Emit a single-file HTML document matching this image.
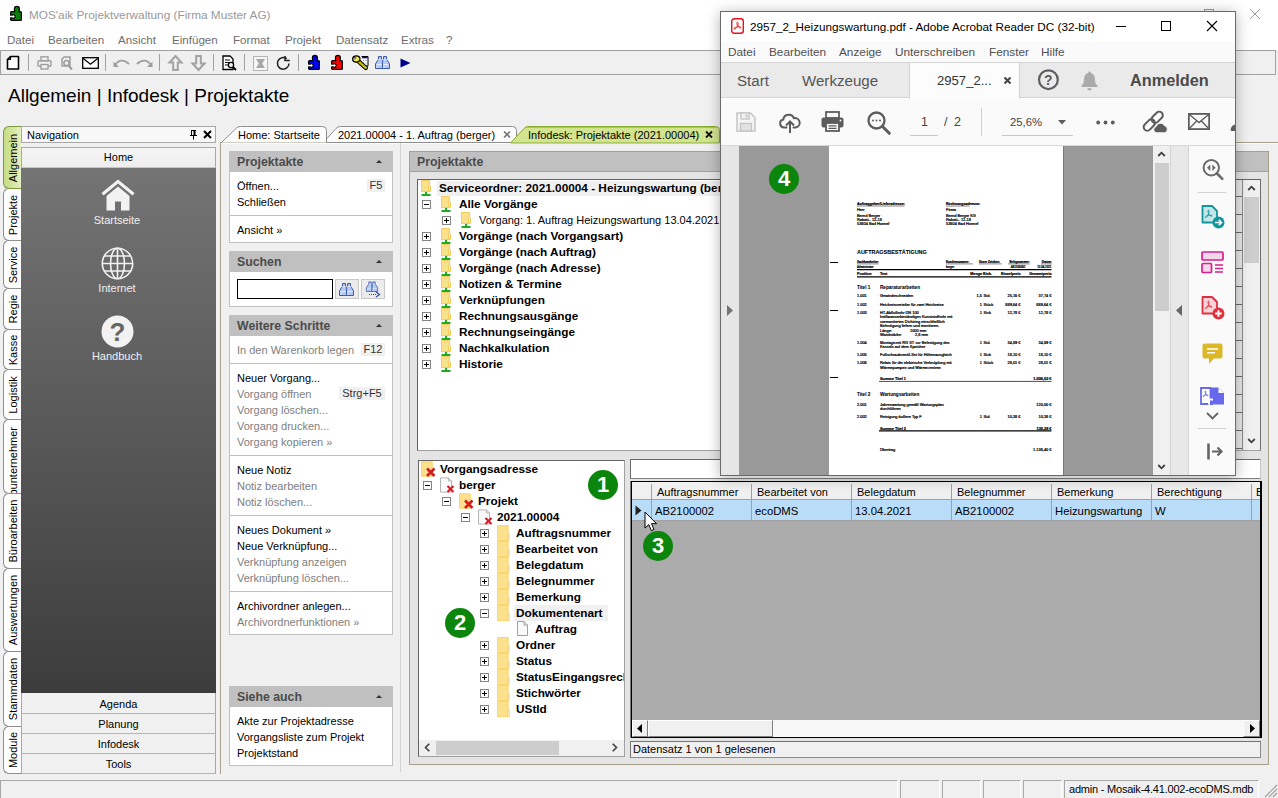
<!DOCTYPE html>
<html>
<head>
<meta charset="utf-8">
<title>MOS'aik Projektverwaltung</title>
<style>
*{box-sizing:border-box;margin:0;padding:0}
html,body{width:1278px;height:798px;overflow:hidden;background:#f0f0f0}
body{font-family:"Liberation Sans",sans-serif;font-size:11px;color:#000;position:relative}
.a{position:absolute}
.t{position:absolute;white-space:pre;line-height:14px;height:14px}
.b{font-weight:bold;font-size:11.8px}
.g{color:#6d6d6d}
.g2{color:#7e7e7e}
svg{position:absolute;overflow:visible}
/* main window chrome */
#titlebar{left:0;top:0;width:1278px;height:50px;background:#fff}
#toolbar{left:0;top:50px;width:1276px;height:25px;border:1px solid #a0a0a0;background:#f0f0f0}
.tsep{position:absolute;top:54px;width:1px;height:17px;background:#a0a0a0}
/* side tabs */
.vt{position:absolute;left:3px;width:18px;border:1px solid #8e8e8e;border-right:none;border-radius:6px 0 0 6px;background:#fdfdfd}
.vt span{position:absolute;left:50%;top:50%;white-space:pre;transform:translate(-50%,-50%) rotate(-90deg);font-size:11px;line-height:14px}
/* nav */
.navbtn{position:absolute;left:21px;width:195px;height:20px;border:1px solid #a8a8a8;border-bottom-color:#c4c4c4;background:linear-gradient(#f4f4f4,#eeeeee);text-align:center;line-height:18px;font-size:11px}
.nb{border-top:none;border-bottom-color:#b4b4b4;background:#f0f0f0;line-height:21px}
/* task panels */
.ph{position:absolute;left:229px;width:164px;height:21px;background:#c0c0c0}
.ph b{position:absolute;left:8px;top:4px;font-size:12.3px;color:#4b4b4b;line-height:14px}
.ph i{position:absolute;right:11px;top:9px;width:0;height:0;border-left:3px solid transparent;border-right:3px solid transparent;border-bottom:3px solid #333}
.pb{position:absolute;left:229px;width:164px;background:#fff;border:1px solid #c0c0c0;border-top:none}
.pl{position:absolute;left:229px;width:164px;height:1px;background:#c0c0c0}
.kb{position:absolute;background:#f0f0f0;height:13px;line-height:13px;text-align:center;color:#333;font-size:11px}
/* trees */
.ex{position:absolute;width:9px;height:9px;border:1px solid #848484;background:#fff}
.ex:before{content:"";position:absolute;left:1px;top:3px;width:5px;height:1px;background:#000}
.ex.p:after{content:"";position:absolute;left:3px;top:1px;width:1px;height:5px;background:#000}
.badge{position:absolute;width:30px;height:30px;border-radius:50%;background:#0c850c;color:#fff;font-weight:bold;font-size:22px;line-height:30px;text-align:center}
</style>
</head>
<body>
<!-- ===== MAIN WINDOW CHROME ===== -->
<div class="a" id="titlebar"></div>
<div class="t" style="left:29px;top:8px;font-size:11.8px;color:#999">MOS'aik Projektverwaltung (Firma Muster AG)</div>
<div class="a" id="toolbar"></div>
<!-- title icon -->
<svg style="left:10px;top:6px" width="12" height="15" viewBox="0 0 12 15"><path d="M0 9.500h4v2.200h-4z" fill="#fff"/><circle cx="3.600" cy="10.500" r="1.600" fill="#fff"/><path d="M0.600 6.600Q0.600 5.600 1.600 5.600H4.900Q4.400 4.600 4.400 2.900A2.500 2.500 0 0 1 9.400 2.900Q9.400 4.600 8.900 5.600H10.400Q11.400 5.600 11.400 6.600V13.400Q11.400 14.400 10.400 14.400H1.600Q0.600 14.400 0.600 13.400V11.900H2.400A1.770 1.770 0 1 0 2.400 9.100H0.600Z" fill="#088008" stroke="#000" stroke-width="1.200" stroke-linejoin="round"/></svg>
<!-- main window caption buttons -->
<svg style="left:1250px;top:9px" width="10" height="10" viewBox="0 0 10 10"><path d="M0 0L10 10M10 0L0 10" stroke="#999" stroke-width="1"/></svg>
<div class="a" style="left:1204px;top:9px;width:10px;height:10px;border:1px solid #999"></div>
<!-- menu -->
<div class="t g" style="left:7px;top:33px;font-size:11.600px">Datei</div>
<div class="t g" style="left:48px;top:33px;font-size:11.600px">Bearbeiten</div>
<div class="t g" style="left:118px;top:33px;font-size:11.600px">Ansicht</div>
<div class="t g" style="left:172px;top:33px;font-size:11.600px">Einfügen</div>
<div class="t g" style="left:233px;top:33px;font-size:11.600px">Format</div>
<div class="t g" style="left:285px;top:33px;font-size:11.600px">Projekt</div>
<div class="t g" style="left:336px;top:33px;font-size:11.600px">Datensatz</div>
<div class="t g" style="left:401px;top:33px;font-size:11.600px">Extras</div>
<div class="t g" style="left:446px;top:33px;font-size:11.600px">?</div>
<!-- toolbar separators -->
<div class="tsep" style="left:28px"></div><div class="tsep" style="left:105px"></div><div class="tsep" style="left:159px"></div><div class="tsep" style="left:213px"></div><div class="tsep" style="left:244px"></div><div class="tsep" style="left:298px"></div>
<!-- toolbar icons -->
<svg style="left:6px;top:55px" width="14" height="16" viewBox="0 0 14 16"><path d="M4.5 1.5h8v12.5h-11v-9.5z" fill="#fff" stroke="#000" stroke-width="1.6" stroke-linejoin="round"/><path d="M1.5 4.5h3v-3" fill="none" stroke="#000" stroke-width="1.2"/></svg>
<svg style="left:37px;top:56px" width="15" height="14" viewBox="0 0 15 14"><g fill="none" stroke="#9e9e9e" stroke-width="1.4"><rect x="4" y="0.8" width="7" height="4"/><rect x="1" y="4.8" width="13" height="5.5" rx="1"/><rect x="4" y="8.5" width="7" height="4.5" fill="#f0f0f0"/></g></svg>
<svg style="left:60px;top:56px" width="14" height="15" viewBox="0 0 14 15"><g fill="none" stroke="#9e9e9e" stroke-width="1.5"><path d="M4 1h6v9h-8v-7z"/><circle cx="6.5" cy="7" r="2.6" fill="#f0f0f0"/><path d="M8.5 9.5l3.5 4" stroke-width="2"/></g></svg>
<svg style="left:82px;top:57px" width="17" height="12" viewBox="0 0 17 12"><rect x="0.700" y="0.700" width="15.600" height="10.600" fill="#fff" stroke="#000" stroke-width="1.300"/><path d="M1 1.200l7.500 6 7.500-6" fill="none" stroke="#000" stroke-width="1.300"/></svg>
<svg style="left:113px;top:58px" width="17" height="10" viewBox="0 0 17 10"><path d="M2 7.5c3-6 9-6.5 14-1.5" fill="none" stroke="#9e9e9e" stroke-width="1.8"/><path d="M0.5 3.5v5.5h5.5z" fill="#9e9e9e"/></svg>
<svg style="left:136px;top:58px" width="17" height="10" viewBox="0 0 17 10"><path d="M15 7.5c-3-6-9-6.5-14-1.5" fill="none" stroke="#9e9e9e" stroke-width="1.8"/><path d="M16.5 3.5v5.5h-5.5z" fill="#9e9e9e"/></svg>
<svg style="left:168px;top:55px" width="15" height="16" viewBox="0 0 15 16"><path d="M7.5 1l6 6.5h-3.7v7.5h-4.6v-7.5h-3.700z" fill="#f0f0f0" stroke="#a2a2a2" stroke-width="2" stroke-linejoin="miter"/></svg>
<svg style="left:191px;top:55px" width="15" height="16" viewBox="0 0 15 16"><path d="M7.5 15l6-6.5h-3.7v-7.500h-4.600v7.500h-3.700z" fill="#f0f0f0" stroke="#a2a2a2" stroke-width="2" stroke-linejoin="miter"/></svg>
<svg style="left:222px;top:55px" width="15" height="16" viewBox="0 0 15 16"><path d="M1 1h7l3 3v10.500h-10z" fill="#fff" stroke="#000" stroke-width="1.3"/><path d="M3 5h5M3 7.500h5M3 10h3" stroke="#000" stroke-width="1"/><circle cx="9" cy="10" r="2.600" fill="#fff" stroke="#000" stroke-width="1.300"/><path d="M11 12l3 3" stroke="#000" stroke-width="1.800"/></svg>
<svg style="left:253px;top:56px" width="15" height="15" viewBox="0 0 15 15"><rect x="0.500" y="0.500" width="14" height="14" fill="#f6f6f6" stroke="#b4b4b4"/><path d="M3 3h9l-2.800 4.500 2.800 4.500h-9l2.800-4.500z" fill="#a8a8a8"/></svg>
<svg style="left:276px;top:55px" width="15" height="16" viewBox="0 0 15 16"><path d="M13 8.500a5.800 5.800 0 1 1-2.300-4.800" fill="none" stroke="#222" stroke-width="1.500"/><path d="M9 1v4.500h4.800" fill="none" stroke="#222" stroke-width="1.500"/></svg>
<svg style="left:308px;top:55px" width="12" height="15" viewBox="0 0 12 15"><path d="M0 9.500h4v2.200h-4z" fill="#fff"/><circle cx="3.600" cy="10.500" r="1.600" fill="#fff"/><path d="M0.600 6.600Q0.600 5.600 1.600 5.600H4.900Q4.400 4.600 4.400 2.900A2.500 2.500 0 0 1 9.400 2.900Q9.400 4.600 8.900 5.600H10.400Q11.400 5.600 11.400 6.600V13.400Q11.400 14.400 10.400 14.400H1.600Q0.600 14.400 0.600 13.400V11.900H2.400A1.770 1.770 0 1 0 2.400 9.100H0.600Z" fill="#0000ff" stroke="#000" stroke-width="1.200" stroke-linejoin="round"/></svg>
<svg style="left:331px;top:55px" width="12" height="15" viewBox="0 0 12 15"><path d="M0 9.500h4v2.200h-4z" fill="#fff"/><circle cx="3.600" cy="10.500" r="1.600" fill="#fff"/><path d="M0.600 6.600Q0.600 5.600 1.600 5.600H4.900Q4.400 4.600 4.400 2.900A2.500 2.500 0 0 1 9.400 2.900Q9.400 4.600 8.900 5.600H10.400Q11.400 5.600 11.400 6.600V13.400Q11.400 14.400 10.400 14.400H1.600Q0.600 14.400 0.600 13.400V11.900H2.400A1.770 1.770 0 1 0 2.400 9.100H0.600Z" fill="#ff0000" stroke="#000" stroke-width="1.200" stroke-linejoin="round"/></svg>
<svg style="left:352px;top:55px" width="17" height="15" viewBox="0 0 17 15"><path d="M9.500 1.500h6.500v9.500h-4" fill="#fff" stroke="#000" stroke-width="1"/><rect x="10" y="2" width="5.500" height="1.300" fill="#0000e0"/><path d="M11 5.500h1M13.500 5.500h1M11 8h1M13.500 8h1" stroke="#888" stroke-width="1"/><path d="M6 5.800l7.800 7" stroke="#000" stroke-width="4.400" stroke-linecap="round"/><path d="M6 5.800l7.800 7" stroke="#e8e000" stroke-width="2.300" stroke-linecap="round"/><path d="M6 5.800l7.800 7" stroke="#000" stroke-width="2.300" stroke-dasharray="0.700 1" opacity=".35"/><ellipse cx="4.300" cy="4" rx="3.700" ry="3.200" fill="#f4ec00" stroke="#000" stroke-width="1.200"/><path d="M2 5.500l4-3" stroke="#fff" stroke-width="1" opacity=".8"/><circle cx="3" cy="3.200" r="0.900" fill="#fff" stroke="#000" stroke-width="0.600"/></svg>
<svg style="left:375px;top:56px" width="15" height="13" viewBox="0 0 15 13"><g stroke="#3a5aae" stroke-width="1" fill="#b4c8f2"><path d="M3.500 0.500h3v2.800l1 1.200v8h-7v-4.500l2-3.500l1-1.200z"/><path d="M8.500 0.500h3v2.800l1 1.200l2 3.500v4.500h-7v-8l1-1.200z"/><path d="M6.800 4h1.400v2.500h-1.400z" fill="#5a78c4" stroke="none"/><path d="M1.500 8.500h5M8.500 8.500h5M3.500 3.500h3M8.500 3.500h3" stroke="#e4ecfc"/><path d="M2 9.500v2.500M9 9.500v2.500" stroke="#dce6fa"/></g></svg>
<svg style="left:400px;top:58px" width="11" height="10" viewBox="0 0 11 10"><path d="M0.500 0.500l10 4.500-10 4.500z" fill="#00008c"/></svg>

<div class="t" style="left:8px;top:84px;font-size:19px;line-height:24px;height:24px">Allgemein | Infodesk | Projektakte</div>
<!-- side vertical tabs -->
<div class="vt" style="top:188px;height:53px"><span>Projekte</span></div>
<div class="vt" style="top:240px;height:49px"><span>Service</span></div>
<div class="vt" style="top:288px;height:42px"><span>Regie</span></div>
<div class="vt" style="top:329px;height:41px"><span>Kasse</span></div>
<div class="vt" style="top:369px;height:51px"><span>Logistik</span></div>
<div class="vt" style="top:419px;height:75px;overflow:hidden"><span style="top:48px">Subunternehmer</span></div>
<div class="vt" style="top:493px;height:76px"><span>Büroarbeiten</span></div>
<div class="vt" style="top:568px;height:84px"><span>Auswertungen</span></div>
<div class="vt" style="top:651px;height:76px"><span>Stammdaten</span></div>
<div class="vt" style="top:726px;height:48px"><span>Module</span></div>
<div class="vt" style="top:126px;height:63px;background:linear-gradient(90deg,#c3dc84,#e6efc0);border-color:#7c9a3c"><span>Allgemein</span></div>
<!-- navigation header -->
<div class="a" style="left:21px;top:126px;width:195px;height:17px;background:#f8f8f8;border:1px solid #a8a8a8"></div>
<div class="t" style="left:27px;top:128px">Navigation</div>
<svg style="left:190px;top:130px" width="7" height="10" viewBox="0 0 7 10"><path d="M1 0.500h5M1.500 0.500v5M0 5.500h7M3.500 5.500v4" stroke="#000" stroke-width="1" fill="none"/><path d="M4.500 0v6" stroke="#000" stroke-width="2"/></svg>
<svg style="left:203px;top:130px" width="9" height="9" viewBox="0 0 9 9"><path d="M1 1l7 7M8 1l-7 7" stroke="#000" stroke-width="2"/></svg>
<!-- home button + dark pane -->
<div class="navbtn" style="top:147px;height:21px">Home</div>
<div class="a" style="left:21px;top:168px;width:195px;height:525px;background:linear-gradient(#747474,#3c3c3c)"></div>
<svg style="left:101px;top:179px" width="34" height="32" viewBox="0 0 34 32"><path d="M17 0.500l16.500 13.500-2 2.500-14.500-12-14.500 12-2-2.500z" fill="#f2f2f2"/><path d="M5.500 17l11.500-9.500 11.500 9.500v14.500h-8.500v-9h-6v9h-8.500z" fill="#f2f2f2"/></svg>
<div class="t" style="left:67px;top:213px;width:100px;text-align:center;color:#f0f0f0">Startseite</div>
<svg style="left:101px;top:247px" width="33" height="33" viewBox="0 0 33 33"><g fill="none" stroke="#f2f2f2" stroke-width="1.600"><circle cx="16.500" cy="16.500" r="15.200"/><ellipse cx="16.500" cy="16.500" rx="7" ry="15.200"/><path d="M16.500 1.300v30.400M1.300 16.500h30.400M3.500 9h26M3.500 24h26"/></g></svg>
<div class="t" style="left:67px;top:281px;width:100px;text-align:center;color:#f0f0f0">Internet</div>
<svg style="left:101px;top:315px" width="33" height="33" viewBox="0 0 33 33"><circle cx="16.500" cy="16.500" r="16" fill="#f2f2f2"/><text x="16.500" y="26" text-anchor="middle" font-family="Liberation Sans" font-weight="bold" font-size="26" fill="#666">?</text></svg>
<div class="t" style="left:67px;top:349px;width:100px;text-align:center;color:#f0f0f0">Handbuch</div>
<div class="navbtn nb" style="top:693px;height:21px;line-height:22px">Agenda</div>
<div class="navbtn nb" style="top:714px">Planung</div>
<div class="navbtn nb" style="top:734px">Infodesk</div>
<div class="navbtn nb" style="top:754px">Tools</div>

<!-- content pane frame -->
<div class="a" style="left:220px;top:142px;width:1060px;height:645px;border:1px solid #a6a08c;background:#f0f0f0"></div>
<div class="a" style="left:221px;top:143px;width:1057px;height:1px;background:#fff"></div>
<!-- document tabs -->
<svg style="left:218px;top:124px" width="520" height="20" viewBox="218 124 520 20">
<path d="M221.500 142.500L236.500 128Q238 126.500 240.500 126.500H322.500Q326.500 126.500 326.500 130.500V142.500" fill="#fcfcfc" stroke="#8e8e8e"/>
<path d="M326.500 139L336 128.500Q337.500 126.500 340.500 126.500H512.500Q516.500 126.500 516.500 130.500V142.500H326.500z" fill="#fcfcfc" stroke="#8e8e8e"/>
<path d="M510.500 143L524 128.500Q525.500 126.500 529 126.500H715.500Q719.500 126.500 719.500 130.500V143z" fill="#d2e490" stroke="#86ac2c"/>
<path d="M526 127.500H716" stroke="#a4c84a" stroke-width="1"/>
<path d="M504 131.500l6 6M510 131.500l-6 6" stroke="#777" stroke-width="1.700"/>
<path d="M706 131.500l6 6M712 131.500l-6 6" stroke="#111" stroke-width="1.800"/>
</svg>
<div class="t" style="left:238px;top:128px">Home: Startseite</div>
<div class="t" style="left:338px;top:128px">2021.00004 - 1. Auftrag (berger)</div>
<div class="t" style="left:528px;top:128px">Infodesk: Projektakte (2021.00004)</div>
<!-- splitter line -->
<div class="a" style="left:400px;top:143px;width:1px;height:629px;background:#d4d4d4"></div>

<!-- task panel 1 -->
<div class="ph" style="top:151px"><b>Projektakte</b><i></i></div>
<div class="pb" style="top:172px;height:71px"></div>
<div class="t" style="left:237px;top:179px">Öffnen...</div>
<div class="kb" style="left:367px;top:179px;width:18px">F5</div>
<div class="t" style="left:237px;top:195px">Schließen</div>
<div class="pl" style="top:215px"></div>
<div class="t" style="left:237px;top:223px">Ansicht »</div>
<!-- task panel 2 -->
<div class="ph" style="top:251px"><b>Suchen</b><i></i></div>
<div class="pb" style="top:272px;height:35px"></div>
<div class="a" style="left:237px;top:279px;width:96px;height:20px;border:1px solid #000;background:#fff"></div>
<div class="a" style="left:335px;top:279px;width:24px;height:20px;border:1px solid #c8c8c8;background:#ececec"></div>
<div class="a" style="left:361px;top:279px;width:24px;height:20px;border:1px solid #c8c8c8;background:#ececec"></div>
<svg style="left:339px;top:283px" width="15" height="13" viewBox="0 0 15 13"><g stroke="#3a5aae" stroke-width="1" fill="#b4c8f2"><path d="M3.500 0.500h3v2.800l1 1.200v8h-7v-4.500l2-3.500l1-1.200z"/><path d="M8.500 0.500h3v2.800l1 1.200l2 3.500v4.500h-7v-8l1-1.200z"/><path d="M6.800 4h1.400v2.500h-1.400z" fill="#5a78c4" stroke="none"/><path d="M1.500 8.500h5M8.500 8.500h5M3.500 3.500h3M8.500 3.500h3" stroke="#e4ecfc"/><path d="M2 9.500v2.500M9 9.500v2.500" stroke="#dce6fa"/></g></svg>
<svg style="left:365px;top:281px" width="17" height="16" viewBox="0 0 17 16"><g transform="translate(1 0.500) scale(.8)"><g stroke="#3a5aae" stroke-width="1" fill="#b4c8f2"><path d="M3.500 0.500h3v2.800l1 1.200v8h-7v-4.500l2-3.500l1-1.200z"/><path d="M8.500 0.500h3v2.800l1 1.200l2 3.500v4.500h-7v-8l1-1.200z"/><path d="M6.800 4h1.400v2.500h-1.400z" fill="#5a78c4" stroke="none"/><path d="M1.500 8.500h5M8.500 8.500h5M3.500 3.500h3M8.500 3.500h3" stroke="#e4ecfc"/><path d="M2 9.500v2.500M9 9.500v2.500" stroke="#dce6fa"/></g></g><path d="M4 13.500h8" stroke="#2a4a9a" stroke-width="1" stroke-dasharray="1 1"/><path d="M11 11l3.500 2.500-3.500 2.500" fill="none" stroke="#2a4a9a" stroke-width="1.200"/></svg>
<!-- task panel 3 -->
<div class="ph" style="top:315px"><b>Weitere Schritte</b><i></i></div>
<div class="pb" style="top:336px;height:299px"></div>
<div class="t g2" style="left:237px;top:343px">In den Warenkorb legen</div>
<div class="kb" style="left:361px;top:343px;width:24px">F12</div>
<div class="pl" style="top:363px"></div>
<div class="t" style="left:237px;top:371px">Neuer Vorgang...</div>
<div class="t g2" style="left:237px;top:387px">Vorgang öffnen</div>
<div class="kb" style="left:339px;top:387px;width:46px">Strg+F5</div>
<div class="t g2" style="left:237px;top:403px">Vorgang löschen...</div>
<div class="t g2" style="left:237px;top:419px">Vorgang drucken...</div>
<div class="t g2" style="left:237px;top:435px">Vorgang kopieren »</div>
<div class="pl" style="top:455px"></div>
<div class="t" style="left:237px;top:463px">Neue Notiz</div>
<div class="t g2" style="left:237px;top:479px">Notiz bearbeiten</div>
<div class="t g2" style="left:237px;top:495px">Notiz löschen...</div>
<div class="pl" style="top:515px"></div>
<div class="t" style="left:237px;top:523px">Neues Dokument »</div>
<div class="t" style="left:237px;top:539px">Neue Verknüpfung...</div>
<div class="t g2" style="left:237px;top:555px">Verknüpfung anzeigen</div>
<div class="t g2" style="left:237px;top:571px">Verknüpfung löschen...</div>
<div class="pl" style="top:591px"></div>
<div class="t" style="left:237px;top:599px">Archivordner anlegen...</div>
<div class="t g2" style="left:237px;top:615px">Archivordnerfunktionen »</div>
<!-- task panel 4 -->
<div class="ph" style="top:686px"><b>Siehe auch</b><i></i></div>
<div class="pb" style="top:707px;height:59px"></div>
<div class="t" style="left:237px;top:714px">Akte zur Projektadresse</div>
<div class="t" style="left:237px;top:730px">Vorgangsliste zum Projekt</div>
<div class="t" style="left:237px;top:746px">Projektstand</div>

<!-- right panel -->
<div class="a" style="left:409px;top:151px;width:860px;height:614px;border:1px solid #a6a08c;background:#e4e4e4"></div>
<div class="a" style="left:410px;top:152px;width:858px;height:19px;background:#c0c0c0"></div>
<div class="a" style="left:410px;top:171px;width:858px;height:1px;background:#a6a08c"></div>
<div class="t" style="left:417px;top:155px;font-weight:bold;font-size:12.3px;color:#4b4b4b">Projektakte</div>
<div class="a" style="left:417px;top:179px;width:844px;height:272px;border:1px solid #646464;border-right-color:#6e6e6e;border-bottom-color:#a0a0a0;background:#fff"></div>
<div class="a" style="left:1230px;top:180px;width:13px;height:270px;background:#e8e8e8;border-right:1px solid #8a8a8a"></div><div class="a" style="left:1230px;top:196px;width:12px;height:1px;background:#6a6a6a"></div><div class="a" style="left:1230px;top:214px;width:12px;height:1px;background:#6a6a6a"></div><div class="a" style="left:1230px;top:232px;width:12px;height:1px;background:#6a6a6a"></div><div class="a" style="left:1230px;top:250px;width:12px;height:1px;background:#6a6a6a"></div><div class="a" style="left:1230px;top:268px;width:12px;height:1px;background:#6a6a6a"></div><div class="a" style="left:1230px;top:286px;width:12px;height:1px;background:#6a6a6a"></div><div class="a" style="left:1230px;top:304px;width:12px;height:1px;background:#6a6a6a"></div><div class="a" style="left:1230px;top:322px;width:12px;height:1px;background:#6a6a6a"></div><div class="a" style="left:1230px;top:340px;width:12px;height:1px;background:#6a6a6a"></div><div class="a" style="left:1230px;top:358px;width:12px;height:1px;background:#6a6a6a"></div><div class="a" style="left:1230px;top:376px;width:12px;height:1px;background:#6a6a6a"></div><div class="a" style="left:1230px;top:394px;width:12px;height:1px;background:#6a6a6a"></div><div class="a" style="left:1230px;top:412px;width:12px;height:1px;background:#6a6a6a"></div><div class="a" style="left:1230px;top:430px;width:12px;height:1px;background:#6a6a6a"></div><div class="a" style="left:1230px;top:448px;width:12px;height:1px;background:#6a6a6a"></div>
<div class="a" style="left:1243px;top:180px;width:17px;height:270px;background:#f0f0f0"></div>
<div class="a" style="left:1244px;top:197px;width:15px;height:66px;background:#cdcdcd"></div>
<svg style="left:1247px;top:185px" width="9" height="6" viewBox="0 0 9 6"><path d="M1.200 5l3.300-3.300 3.300 3.300" fill="none" stroke="#404040" stroke-width="1.800"/></svg>
<svg style="left:1247px;top:438px" width="9" height="6" viewBox="0 0 9 6"><path d="M1.200 1l3.300 3.300 3.300-3.300" fill="none" stroke="#404040" stroke-width="1.800"/></svg>
<div class="a" style="left:437px;top:181px;width:283px;height:15px;background:#f0f0f0"></div>
<svg style="left:421px;top:180px" width="11" height="16" viewBox="0 0 11 16"><path d="M0.500 0.500h8v11h-8z" fill="#fce18c" stroke="#f5cd5c"/><path d="M7.500 6.800q0-1.300 1-1.300h0q1 0 1 1.300v4.700h-2z" fill="#fdecb4" stroke="#f5cd5c"/><rect x="4" y="12" width="2" height="2.200" fill="#20ae20"/><rect x="0.500" y="14" width="9" height="2" fill="#20ae20"/></svg>
<div class="t b" style="left:439px;top:181px">Serviceordner: 2021.00004 - Heizungswartung (berger)</div>
<div class="ex" style="left:422px;top:200px"></div>
<svg style="left:441px;top:196px" width="11" height="16" viewBox="0 0 11 16"><path d="M0.500 0.500h8v11h-8z" fill="#fce18c" stroke="#f5cd5c"/><path d="M7.500 6.800q0-1.300 1-1.300h0q1 0 1 1.300v4.700h-2z" fill="#fdecb4" stroke="#f5cd5c"/><rect x="4" y="12" width="2" height="2.200" fill="#20ae20"/><rect x="0.500" y="14" width="9" height="2" fill="#20ae20"/></svg>
<div class="t b" style="left:459px;top:197px">Alle Vorgänge</div>
<div class="ex p" style="left:442px;top:216px"></div>
<svg style="left:461px;top:212px" width="11" height="16" viewBox="0 0 11 16"><path d="M0.500 0.500h8v11h-8z" fill="#fce18c" stroke="#f5cd5c"/><path d="M7.500 6.800q0-1.300 1-1.300h0q1 0 1 1.300v4.700h-2z" fill="#fdecb4" stroke="#f5cd5c"/><rect x="4" y="12" width="2" height="2.200" fill="#20ae20"/><rect x="0.500" y="14" width="9" height="2" fill="#20ae20"/></svg>
<div class="t" style="left:479px;top:213px">Vorgang: 1. Auftrag Heizungswartung 13.04.2021</div>
<div class="ex p" style="left:422px;top:232px"></div>
<svg style="left:441px;top:228px" width="11" height="16" viewBox="0 0 11 16"><path d="M0.500 0.500h8v11h-8z" fill="#fce18c" stroke="#f5cd5c"/><path d="M7.500 6.800q0-1.300 1-1.300h0q1 0 1 1.300v4.700h-2z" fill="#fdecb4" stroke="#f5cd5c"/><rect x="4" y="12" width="2" height="2.200" fill="#20ae20"/><rect x="0.500" y="14" width="9" height="2" fill="#20ae20"/></svg>
<div class="t b" style="left:459px;top:229px">Vorgänge (nach Vorgangsart)</div>
<div class="ex p" style="left:422px;top:248px"></div>
<svg style="left:441px;top:244px" width="11" height="16" viewBox="0 0 11 16"><path d="M0.500 0.500h8v11h-8z" fill="#fce18c" stroke="#f5cd5c"/><path d="M7.500 6.800q0-1.300 1-1.300h0q1 0 1 1.300v4.700h-2z" fill="#fdecb4" stroke="#f5cd5c"/><rect x="4" y="12" width="2" height="2.200" fill="#20ae20"/><rect x="0.500" y="14" width="9" height="2" fill="#20ae20"/></svg>
<div class="t b" style="left:459px;top:245px">Vorgänge (nach Auftrag)</div>
<div class="ex p" style="left:422px;top:264px"></div>
<svg style="left:441px;top:260px" width="11" height="16" viewBox="0 0 11 16"><path d="M0.500 0.500h8v11h-8z" fill="#fce18c" stroke="#f5cd5c"/><path d="M7.500 6.800q0-1.300 1-1.300h0q1 0 1 1.300v4.700h-2z" fill="#fdecb4" stroke="#f5cd5c"/><rect x="4" y="12" width="2" height="2.200" fill="#20ae20"/><rect x="0.500" y="14" width="9" height="2" fill="#20ae20"/></svg>
<div class="t b" style="left:459px;top:261px">Vorgänge (nach Adresse)</div>
<div class="ex p" style="left:422px;top:280px"></div>
<svg style="left:441px;top:276px" width="11" height="16" viewBox="0 0 11 16"><path d="M0.500 0.500h8v11h-8z" fill="#fce18c" stroke="#f5cd5c"/><path d="M7.500 6.800q0-1.300 1-1.300h0q1 0 1 1.300v4.700h-2z" fill="#fdecb4" stroke="#f5cd5c"/><rect x="4" y="12" width="2" height="2.200" fill="#20ae20"/><rect x="0.500" y="14" width="9" height="2" fill="#20ae20"/></svg>
<div class="t b" style="left:459px;top:277px">Notizen &amp; Termine</div>
<div class="ex p" style="left:422px;top:296px"></div>
<svg style="left:441px;top:292px" width="11" height="16" viewBox="0 0 11 16"><path d="M0.500 0.500h8v11h-8z" fill="#fce18c" stroke="#f5cd5c"/><path d="M7.500 6.800q0-1.300 1-1.300h0q1 0 1 1.300v4.700h-2z" fill="#fdecb4" stroke="#f5cd5c"/><rect x="4" y="12" width="2" height="2.200" fill="#20ae20"/><rect x="0.500" y="14" width="9" height="2" fill="#20ae20"/></svg>
<div class="t b" style="left:459px;top:293px">Verknüpfungen</div>
<div class="ex p" style="left:422px;top:312px"></div>
<svg style="left:441px;top:308px" width="11" height="16" viewBox="0 0 11 16"><path d="M0.500 0.500h8v11h-8z" fill="#fce18c" stroke="#f5cd5c"/><path d="M7.500 6.800q0-1.300 1-1.300h0q1 0 1 1.300v4.700h-2z" fill="#fdecb4" stroke="#f5cd5c"/><rect x="4" y="12" width="2" height="2.200" fill="#20ae20"/><rect x="0.500" y="14" width="9" height="2" fill="#20ae20"/></svg>
<div class="t b" style="left:459px;top:309px">Rechnungsausgänge</div>
<div class="ex p" style="left:422px;top:328px"></div>
<svg style="left:441px;top:324px" width="11" height="16" viewBox="0 0 11 16"><path d="M0.500 0.500h8v11h-8z" fill="#fce18c" stroke="#f5cd5c"/><path d="M7.500 6.800q0-1.300 1-1.300h0q1 0 1 1.300v4.700h-2z" fill="#fdecb4" stroke="#f5cd5c"/><rect x="4" y="12" width="2" height="2.200" fill="#20ae20"/><rect x="0.500" y="14" width="9" height="2" fill="#20ae20"/></svg>
<div class="t b" style="left:459px;top:325px">Rechnungseingänge</div>
<div class="ex p" style="left:422px;top:344px"></div>
<svg style="left:441px;top:340px" width="11" height="16" viewBox="0 0 11 16"><path d="M0.500 0.500h8v11h-8z" fill="#fce18c" stroke="#f5cd5c"/><path d="M7.500 6.800q0-1.300 1-1.300h0q1 0 1 1.300v4.700h-2z" fill="#fdecb4" stroke="#f5cd5c"/><rect x="4" y="12" width="2" height="2.200" fill="#20ae20"/><rect x="0.500" y="14" width="9" height="2" fill="#20ae20"/></svg>
<div class="t b" style="left:459px;top:341px">Nachkalkulation</div>
<div class="ex p" style="left:422px;top:360px"></div>
<svg style="left:441px;top:356px" width="11" height="16" viewBox="0 0 11 16"><path d="M0.500 0.500h8v11h-8z" fill="#fce18c" stroke="#f5cd5c"/><path d="M7.500 6.800q0-1.300 1-1.300h0q1 0 1 1.300v4.700h-2z" fill="#fdecb4" stroke="#f5cd5c"/><rect x="4" y="12" width="2" height="2.200" fill="#20ae20"/><rect x="0.500" y="14" width="9" height="2" fill="#20ae20"/></svg>
<div class="t b" style="left:459px;top:357px">Historie</div>
<!-- lower tree -->
<div class="a" style="left:418px;top:460px;width:207px;height:297px;border:1px solid #646464;border-right-color:#a0a0a0;border-bottom-color:#a0a0a0;background:#fff;overflow:hidden"></div>
<svg style="left:421px;top:461px" width="15" height="16" viewBox="0 0 15 16"><path d="M0 0.400h11.600v15.200h-11.600z" fill="#fde08c"/><path d="M0.500 0.900h10.600v14.200h-10.600z" fill="none" stroke="#fbd670"/><path d="M6 7.500l7.500 7.500M13.500 7.500l-7.500 7.500" stroke="#da1822" stroke-width="2.600"/></svg>
<div class="t b" style="left:440px;top:462px">Vorgangsadresse</div>
<div class="ex" style="left:423px;top:481px"></div>
<svg style="left:440px;top:477px" width="15" height="16" viewBox="0 0 15 16"><path d="M0.500 0.900h8l3 3v11.200h-11z" fill="#fafafa" stroke="#b4b4b4"/><path d="M8.500 0.900v3h3" fill="none" stroke="#b4b4b4"/><path d="M7.500 9l6 6M13.500 9l-6 6" stroke="#da1822" stroke-width="2"/></svg>
<div class="t b" style="left:459px;top:478px">berger</div>
<div class="ex" style="left:442px;top:497px"></div>
<svg style="left:459px;top:493px" width="15" height="16" viewBox="0 0 15 16"><path d="M0 0.400h11.600v15.200h-11.600z" fill="#fde08c"/><path d="M0.500 0.900h10.600v14.200h-10.600z" fill="none" stroke="#fbd670"/><path d="M6 7.500l7.500 7.500M13.500 7.500l-7.500 7.500" stroke="#da1822" stroke-width="2.600"/></svg>
<div class="t b" style="left:478px;top:494px">Projekt</div>
<div class="ex" style="left:461px;top:513px"></div>
<svg style="left:478px;top:509px" width="15" height="16" viewBox="0 0 15 16"><path d="M0.500 0.900h8l3 3v11.200h-11z" fill="#fafafa" stroke="#b4b4b4"/><path d="M8.500 0.900v3h3" fill="none" stroke="#b4b4b4"/><path d="M7.500 9l6 6M13.500 9l-6 6" stroke="#da1822" stroke-width="2"/></svg>
<div class="t b" style="left:497px;top:510px">2021.00004</div>
<div class="ex p" style="left:480px;top:529px"></div>
<svg style="left:497px;top:525px" width="13" height="16" viewBox="0 0 13 16"><path d="M0 0h11.500v16h-11.500z" fill="#fde08c"/><path d="M0.500 0.500h10.500v15h-10.500z" fill="none" stroke="#fbd670"/><path d="M10.500 9.300q0-0.800 0.800-0.800h0.200q0.800 0 0.800 0.800v6.200h-1.800z" fill="#fdecb4" stroke="#f7cf66" stroke-width="0.800"/></svg>
<div class="t b" style="left:516px;top:526px;">Auftragsnummer</div>
<div class="ex p" style="left:480px;top:545px"></div>
<svg style="left:497px;top:541px" width="13" height="16" viewBox="0 0 13 16"><path d="M0 0h11.500v16h-11.500z" fill="#fde08c"/><path d="M0.500 0.500h10.500v15h-10.500z" fill="none" stroke="#fbd670"/><path d="M10.500 9.300q0-0.800 0.800-0.800h0.200q0.800 0 0.800 0.800v6.200h-1.800z" fill="#fdecb4" stroke="#f7cf66" stroke-width="0.800"/></svg>
<div class="t b" style="left:516px;top:542px;">Bearbeitet von</div>
<div class="ex p" style="left:480px;top:561px"></div>
<svg style="left:497px;top:557px" width="13" height="16" viewBox="0 0 13 16"><path d="M0 0h11.500v16h-11.500z" fill="#fde08c"/><path d="M0.500 0.500h10.500v15h-10.500z" fill="none" stroke="#fbd670"/><path d="M10.500 9.300q0-0.800 0.800-0.800h0.200q0.800 0 0.800 0.800v6.200h-1.800z" fill="#fdecb4" stroke="#f7cf66" stroke-width="0.800"/></svg>
<div class="t b" style="left:516px;top:558px;">Belegdatum</div>
<div class="ex p" style="left:480px;top:577px"></div>
<svg style="left:497px;top:573px" width="13" height="16" viewBox="0 0 13 16"><path d="M0 0h11.500v16h-11.500z" fill="#fde08c"/><path d="M0.500 0.500h10.500v15h-10.500z" fill="none" stroke="#fbd670"/><path d="M10.500 9.300q0-0.800 0.800-0.800h0.200q0.800 0 0.800 0.800v6.200h-1.800z" fill="#fdecb4" stroke="#f7cf66" stroke-width="0.800"/></svg>
<div class="t b" style="left:516px;top:574px;">Belegnummer</div>
<div class="ex p" style="left:480px;top:593px"></div>
<svg style="left:497px;top:589px" width="13" height="16" viewBox="0 0 13 16"><path d="M0 0h11.500v16h-11.500z" fill="#fde08c"/><path d="M0.500 0.500h10.500v15h-10.500z" fill="none" stroke="#fbd670"/><path d="M10.500 9.300q0-0.800 0.800-0.800h0.200q0.800 0 0.800 0.800v6.200h-1.800z" fill="#fdecb4" stroke="#f7cf66" stroke-width="0.800"/></svg>
<div class="t b" style="left:516px;top:590px;">Bemerkung</div>
<div class="a" style="left:514px;top:605px;width:94px;height:16px;background:#f0f0f0"></div>
<div class="ex" style="left:480px;top:609px"></div>
<svg style="left:497px;top:605px" width="13" height="16" viewBox="0 0 13 16"><path d="M0 0h11.500v16h-11.500z" fill="#fde08c"/><path d="M0.500 0.500h10.500v15h-10.500z" fill="none" stroke="#fbd670"/><path d="M10.500 9.300q0-0.800 0.800-0.800h0.200q0.800 0 0.800 0.800v6.200h-1.800z" fill="#fdecb4" stroke="#f7cf66" stroke-width="0.800"/></svg>
<div class="t b" style="left:516px;top:606px;">Dokumentenart</div>
<svg style="left:517px;top:621px" width="11" height="15" viewBox="0 0 11 15"><path d="M0.500 0.500h6.500l3.500 3.500v10.500h-10z" fill="#fafafa" stroke="#a0a0a0"/><path d="M7 0.500v3.500h3.500" fill="none" stroke="#a0a0a0"/></svg>
<div class="t b" style="left:535px;top:622px">Auftrag</div>
<div class="ex p" style="left:480px;top:641px"></div>
<svg style="left:497px;top:637px" width="13" height="16" viewBox="0 0 13 16"><path d="M0 0h11.500v16h-11.500z" fill="#fde08c"/><path d="M0.500 0.500h10.500v15h-10.500z" fill="none" stroke="#fbd670"/><path d="M10.500 9.300q0-0.800 0.800-0.800h0.200q0.800 0 0.800 0.800v6.200h-1.800z" fill="#fdecb4" stroke="#f7cf66" stroke-width="0.800"/></svg>
<div class="t b" style="left:516px;top:638px;">Ordner</div>
<div class="ex p" style="left:480px;top:657px"></div>
<svg style="left:497px;top:653px" width="13" height="16" viewBox="0 0 13 16"><path d="M0 0h11.500v16h-11.500z" fill="#fde08c"/><path d="M0.500 0.500h10.500v15h-10.500z" fill="none" stroke="#fbd670"/><path d="M10.500 9.300q0-0.800 0.800-0.800h0.200q0.800 0 0.800 0.800v6.200h-1.800z" fill="#fdecb4" stroke="#f7cf66" stroke-width="0.800"/></svg>
<div class="t b" style="left:516px;top:654px;">Status</div>
<div class="ex p" style="left:480px;top:673px"></div>
<svg style="left:497px;top:669px" width="13" height="16" viewBox="0 0 13 16"><path d="M0 0h11.500v16h-11.500z" fill="#fde08c"/><path d="M0.500 0.500h10.500v15h-10.500z" fill="none" stroke="#fbd670"/><path d="M10.500 9.300q0-0.800 0.800-0.800h0.200q0.800 0 0.800 0.800v6.200h-1.800z" fill="#fdecb4" stroke="#f7cf66" stroke-width="0.800"/></svg>
<div class="t b" style="left:516px;top:670px;width:108px;overflow:hidden;">StatusEingangsrechnung</div>
<div class="ex p" style="left:480px;top:689px"></div>
<svg style="left:497px;top:685px" width="13" height="16" viewBox="0 0 13 16"><path d="M0 0h11.500v16h-11.500z" fill="#fde08c"/><path d="M0.500 0.500h10.500v15h-10.500z" fill="none" stroke="#fbd670"/><path d="M10.500 9.300q0-0.800 0.800-0.800h0.200q0.800 0 0.800 0.800v6.200h-1.800z" fill="#fdecb4" stroke="#f7cf66" stroke-width="0.800"/></svg>
<div class="t b" style="left:516px;top:686px;">Stichwörter</div>
<div class="ex p" style="left:480px;top:705px"></div>
<svg style="left:497px;top:701px" width="13" height="16" viewBox="0 0 13 16"><path d="M0 0h11.500v16h-11.500z" fill="#fde08c"/><path d="M0.500 0.500h10.500v15h-10.500z" fill="none" stroke="#fbd670"/><path d="M10.500 9.300q0-0.800 0.800-0.800h0.200q0.800 0 0.800 0.800v6.200h-1.800z" fill="#fdecb4" stroke="#f7cf66" stroke-width="0.800"/></svg>
<div class="t b" style="left:516px;top:702px;">UStId</div>
<div class="a" style="left:419px;top:740px;width:205px;height:16px;background:#f0f0f0"></div>
<div class="a" style="left:436px;top:741px;width:123px;height:14px;background:#cdcdcd"></div>
<svg style="left:424px;top:743px" width="6" height="9" viewBox="0 0 6 9"><path d="M5.300 0.700l-3.800 3.800 3.800 3.800" fill="none" stroke="#404040" stroke-width="1.600"/></svg>
<svg style="left:612px;top:743px" width="6" height="9" viewBox="0 0 6 9"><path d="M0.700 0.700l3.800 3.800-3.800 3.800" fill="none" stroke="#404040" stroke-width="1.600"/></svg>
<!-- input above grid -->
<div class="a" style="left:630px;top:459px;width:631px;height:20px;border:1px solid #6a6a6a;border-right-color:#c8c8c8;border-bottom-color:#808080;background:#fff"></div>
<!-- grid -->
<div class="a" style="left:630px;top:481px;width:1px;height:257px;background:#7c7c7c"></div><div class="a" style="left:631px;top:481px;width:631px;height:257px;border:1px solid #000;border-right-width:2px;background:#ababab"></div>
<div class="a" style="left:632px;top:482px;width:628px;height:18px;background:#f0f0f0;border-bottom:1px solid #a0a0a0"></div>
<div class="a" style="left:632px;top:500px;width:628px;height:21px;background:#b9dcf9;border-bottom:1px solid #a0a0a0"></div>
<div class="a" style="left:651px;top:484px;width:1px;height:15px;background:#a0a0a0"></div><div class="a" style="left:651px;top:500px;width:1px;height:21px;background:#a0a0a0"></div>
<div class="a" style="left:751px;top:484px;width:1px;height:15px;background:#a0a0a0"></div><div class="a" style="left:751px;top:500px;width:1px;height:21px;background:#a0a0a0"></div>
<div class="a" style="left:851px;top:484px;width:1px;height:15px;background:#a0a0a0"></div><div class="a" style="left:851px;top:500px;width:1px;height:21px;background:#a0a0a0"></div>
<div class="a" style="left:951px;top:484px;width:1px;height:15px;background:#a0a0a0"></div><div class="a" style="left:951px;top:500px;width:1px;height:21px;background:#a0a0a0"></div>
<div class="a" style="left:1051px;top:484px;width:1px;height:15px;background:#a0a0a0"></div><div class="a" style="left:1051px;top:500px;width:1px;height:21px;background:#a0a0a0"></div>
<div class="a" style="left:1151px;top:484px;width:1px;height:15px;background:#a0a0a0"></div><div class="a" style="left:1151px;top:500px;width:1px;height:21px;background:#a0a0a0"></div>
<div class="a" style="left:1251px;top:484px;width:1px;height:15px;background:#a0a0a0"></div><div class="a" style="left:1251px;top:500px;width:1px;height:21px;background:#a0a0a0"></div>
<div class="t" style="left:657px;top:485px;">Auftragsnummer</div>
<div class="t" style="left:757px;top:485px;">Bearbeitet von</div>
<div class="t" style="left:857px;top:485px;">Belegdatum</div>
<div class="t" style="left:957px;top:485px;">Belegnummer</div>
<div class="t" style="left:1057px;top:485px;">Bemerkung</div>
<div class="t" style="left:1157px;top:485px;">Berechtigung</div>
<div class="t" style="left:1256px;top:485px;width:5px;overflow:hidden;">B</div>
<div class="t" style="left:655px;top:504px;font-size:11.300px">AB2100002</div>
<div class="t" style="left:755px;top:504px;font-size:11.300px">ecoDMS</div>
<div class="t" style="left:855px;top:504px;font-size:11.300px">13.04.2021</div>
<div class="t" style="left:955px;top:504px;font-size:11.300px">AB2100002</div>
<div class="t" style="left:1055px;top:504px;font-size:11.300px">Heizungswartung</div>
<div class="t" style="left:1155px;top:504px;font-size:11.300px">W</div>
<svg style="left:635px;top:505px" width="7" height="11" viewBox="0 0 7 11"><path d="M0.500 0.500l6 5-6 5z" fill="#222"/></svg>
<div class="a" style="left:632px;top:720px;width:628px;height:17px;background:#f8f8f8"></div>
<div class="a" style="left:632px;top:720px;width:16px;height:17px;background:#f0f0f0;border:1px solid #fff;border-right-color:#808080;border-bottom-color:#808080"></div>
<div class="a" style="left:648px;top:720px;width:125px;height:17px;background:#f0f0f0;border:1px solid #fff;border-right-color:#808080;border-bottom-color:#808080"></div>
<div class="a" style="left:1243px;top:720px;width:17px;height:17px;background:#f0f0f0;border:1px solid #fff;border-right-color:#808080;border-bottom-color:#808080"></div>
<svg style="left:637px;top:724px" width="5" height="9" viewBox="0 0 5 9"><path d="M5 0v9l-5-4.500z" fill="#000"/></svg>
<svg style="left:1250px;top:724px" width="5" height="9" viewBox="0 0 5 9"><path d="M0 0v9l5-4.500z" fill="#000"/></svg>
<!-- grid status -->
<div class="a" style="left:630px;top:741px;width:631px;height:17px;border:1px solid #747474;border-right-color:#8c8c8c;border-bottom-color:#8c8c8c;background:#f0f0f0"></div>
<div class="t" style="left:633px;top:742px">Datensatz 1 von 1 gelesenen</div>
<!-- status bar -->
<div class="a" style="left:0;top:774px;width:1278px;height:24px;background:#f0f0f0"></div>
<div class="a" style="left:0px;top:780px;width:898px;height:18px;border:1px solid #a8a8a8;border-right-color:#fff;border-bottom:none;background:#f0f0f0"></div>
<div class="a" style="left:900px;top:780px;width:40px;height:18px;border:1px solid #a8a8a8;border-right-color:#fff;border-bottom:none;background:#f0f0f0"></div>
<div class="a" style="left:942px;top:780px;width:39px;height:18px;border:1px solid #a8a8a8;border-right-color:#fff;border-bottom:none;background:#f0f0f0"></div>
<div class="a" style="left:983px;top:780px;width:38px;height:18px;border:1px solid #a8a8a8;border-right-color:#fff;border-bottom:none;background:#f0f0f0"></div>
<div class="a" style="left:1023px;top:780px;width:39px;height:18px;border:1px solid #a8a8a8;border-right-color:#fff;border-bottom:none;background:#f0f0f0"></div>
<div class="a" style="left:1064px;top:780px;width:195px;height:18px;border:1px solid #a8a8a8;border-right-color:#fff;border-bottom:none;background:#f0f0f0"></div>
<div class="t" style="left:1069px;top:782px;letter-spacing:-0.210px">admin - Mosaik-4.41.002-ecoDMS.mdb</div>
<svg style="left:1264px;top:784px" width="14" height="14" viewBox="0 0 14 14"><path d="M13 1L1 13M13 5L5 13M13 9L9 13" stroke="#a0a0a0" stroke-width="1.200"/></svg>
<!-- ===== ACROBAT WINDOW ===== -->
<div class="a" id="acro" style="left:720px;top:11px;width:516px;height:465px;background:#fff;border:1px solid #6a6a6a;box-shadow:0 2px 13px rgba(0,0,0,.30);overflow:hidden">
<svg style="left:10px;top:6px" width="13" height="16" viewBox="0 0 13 16"><rect x="0.700" y="0.700" width="11.600" height="14.600" rx="2.500" fill="#fff" stroke="#e8121a" stroke-width="1.400"/><path d="M6.500 4.200c1.200 0 .8 2.400 0 4.200-0.800 1.500-2.600 3.200-3.400 2.500-0.800-0.900 1.600-1.900 3.500-2.100 1.800-0.200 3.700 0.100 3.400 0.900-0.400 0.800-2.200-0.300-3.200-1.500-1-1.300-1.500-4-0.300-4z" fill="none" stroke="#e8121a" stroke-width="0.900"/></svg>
<div class="t" style="left:29px;top:7px;font-size:11.730px;line-height:16px;height:16px">2957_2_Heizungswartung.pdf - Adobe Acrobat Reader DC (32-bit)</div>
<div class="a" style="left:395px;top:14px;width:10px;height:1px;background:#000"></div>
<div class="a" style="left:440px;top:9px;width:10px;height:10px;border:1px solid #000"></div>
<svg style="left:486px;top:9px" width="10" height="10" viewBox="0 0 10 10"><path d="M0 0L10 10M10 0L0 10" stroke="#000" stroke-width="1.100"/></svg>
<div class="a" style="left:0;top:30px;width:514px;height:21px;background:#fafafa"></div>
<div class="t" style="left:7px;top:33px;font-size:11.800px;color:#505050">Datei</div>
<div class="t" style="left:48px;top:33px;font-size:11.800px;color:#505050">Bearbeiten</div>
<div class="t" style="left:118px;top:33px;font-size:11.800px;color:#505050">Anzeige</div>
<div class="t" style="left:174px;top:33px;font-size:11.800px;color:#505050">Unterschreiben</div>
<div class="t" style="left:268px;top:33px;font-size:11.800px;color:#505050">Fenster</div>
<div class="t" style="left:320px;top:33px;font-size:11.800px;color:#505050">Hilfe</div>
<div class="a" style="left:0;top:50px;width:514px;height:36px;background:#eaeaea;border-top:1px solid #d6d6d6;border-bottom:1px solid #d4d4d4"></div>
<div class="a" style="left:188px;top:51px;width:111px;height:36px;background:#fcfcfc;border-left:1px solid #d4d4d4;border-right:1px solid #d4d4d4"></div>
<div class="t" style="left:16px;top:59px;font-size:15.100px;line-height:20px;height:20px;color:#555">Start</div>
<div class="t" style="left:81px;top:59px;font-size:15.100px;line-height:20px;height:20px;color:#555">Werkzeuge</div>
<div class="t" style="left:216px;top:60px;font-size:13.100px;line-height:18px;height:18px;color:#333">2957_2...</div>
<svg style="left:283px;top:65px" width="7" height="7" viewBox="0 0 7 7"><path d="M0.500 0.500l6 6M6.500 0.500l-6 6" stroke="#444" stroke-width="2"/></svg>
<svg style="left:316px;top:57px" width="23" height="23" viewBox="0 0 23 23"><circle cx="11.400" cy="10.700" r="9.400" fill="none" stroke="#5e5e5e" stroke-width="2.200"/><text x="11.400" y="15.800" text-anchor="middle" font-family="Liberation Sans" font-weight="bold" font-size="14" fill="#5e5e5e">?</text></svg>
<svg style="left:360px;top:59px" width="17" height="20" viewBox="0 0 17 20"><path d="M8.500 0.500c1 0 1.300 0.700 1.300 1.500 2.700 0.800 4.200 3 4.200 6.500 0 4 1.500 5.200 2.500 6v1.500h-16v-1.500c1-0.800 2.500-2 2.500-6 0-3.500 1.500-5.700 4.200-6.500 0-0.800 0.300-1.500 1.300-1.500z" fill="#aaa"/><path d="M6.300 17.200h4.400a2.200 2.200 0 0 1-4.400 0z" fill="#aaa"/></svg>
<div class="t" style="left:409px;top:58px;font-size:16.300px;font-weight:bold;line-height:20px;height:20px;color:#4a4a4a">Anmelden</div>
<div class="a" style="left:0;top:87px;width:514px;height:47px;background:#fafafa;border-bottom:1px solid #d8d8d8"></div>
<svg style="left:15px;top:100px" width="20" height="20" viewBox="0 0 20 20"><path d="M1 1h13.500l4.500 4.500v13.500h-18z" fill="#f4f4f4" stroke="#c4c4c4" stroke-width="1.500"/><rect x="5" y="1" width="8" height="6" fill="#f4f4f4" stroke="#c4c4c4" stroke-width="1.300"/><rect x="9.500" y="2.500" width="2" height="3" fill="#c4c4c4"/><rect x="4.500" y="11.500" width="11" height="7.500" fill="#e2e2e2" stroke="#c4c4c4" stroke-width="1.300"/></svg>
<svg style="left:58px;top:100px" width="22" height="22" viewBox="0 0 22 22"><path d="M7.500 15.500h-2.500a4 4 0 0 1-0.700-7.900 5.500 5.500 0 0 1 10.600-1.400 4.700 4.700 0 0 1 2.100 9.200h-2.500" fill="none" stroke="#5c5c5c" stroke-width="2" stroke-linecap="round"/><path d="M11 21v-11M7 13.500l4-4 4 4" fill="none" stroke="#5c5c5c" stroke-width="2"/></svg>
<svg style="left:100px;top:99px" width="23" height="21" viewBox="0 0 23 21"><rect x="5" y="1" width="13" height="6" fill="#fafafa" stroke="#5c5c5c" stroke-width="1.800"/><rect x="0.500" y="6.500" width="22" height="10" rx="2" fill="#5c5c5c"/><rect x="5" y="12" width="13" height="8" fill="#fafafa" stroke="#5c5c5c" stroke-width="1.800"/><path d="M7.500 14.800h8M7.500 17.300h8" stroke="#5c5c5c" stroke-width="1.200"/><circle cx="19.500" cy="9.500" r="0.900" fill="#fafafa"/></svg>
<svg style="left:146px;top:99px" width="24" height="24" viewBox="0 0 24 24"><circle cx="9.500" cy="9.500" r="8" fill="none" stroke="#5c5c5c" stroke-width="2.300"/><path d="M15.500 15.500l6.800 6.800" stroke="#5c5c5c" stroke-width="3" stroke-linecap="round"/><circle cx="6" cy="9.500" r="1" fill="#5c5c5c"/><circle cx="9.500" cy="9.500" r="1" fill="#5c5c5c"/><circle cx="13" cy="9.500" r="1" fill="#5c5c5c"/></svg>
<div class="t" style="left:200px;top:102px;font-size:12.500px;line-height:16px;height:16px;color:#444">1</div>
<div class="a" style="left:189px;top:123px;width:28px;height:1px;background:#c8c8c8"></div>
<div class="t" style="left:223px;top:102px;font-size:12.500px;line-height:16px;height:16px;color:#444;word-spacing:3px">/ 2</div>
<div class="a" style="left:260px;top:96px;width:1px;height:28px;background:#d0d0d0"></div>
<div class="t" style="left:289px;top:102px;font-size:11.300px;line-height:16px;height:16px;color:#444">25,6%</div>
<svg style="left:337px;top:108px" width="8" height="5" viewBox="0 0 8 5"><path d="M0 0h8l-4 4.500z" fill="#5c5c5c"/></svg>
<div class="a" style="left:281px;top:123px;width:71px;height:1px;background:#c8c8c8"></div>
<svg style="left:375px;top:108px" width="19" height="5" viewBox="0 0 19 5"><circle cx="2.200" cy="2.500" r="1.900" fill="#5c5c5c"/><circle cx="9.500" cy="2.500" r="1.900" fill="#5c5c5c"/><circle cx="16.800" cy="2.500" r="1.900" fill="#5c5c5c"/></svg>
<svg style="left:421px;top:99px" width="26" height="23" viewBox="0 0 26 23"><g fill="none" stroke="#5c5c5c" stroke-width="2"><rect x="-6.500" y="-3.600" width="13" height="7.200" rx="3.600" transform="translate(7.300 14) rotate(-45)"/><rect x="-6.500" y="-3.600" width="13" height="7.200" rx="3.600" transform="translate(15.200 6.300) rotate(-45)"/></g><path d="M14.500 21.800a3.200 3.200 0 0 1-0.300-6.300 4.300 4.300 0 0 1 8.100-0.900 3.700 3.700 0 0 1 0.400 7.200z" fill="#5c5c5c" stroke="#fafafa" stroke-width="1"/></svg>
<svg style="left:467px;top:101px" width="22" height="17" viewBox="0 0 23 17" preserveAspectRatio="none"><rect x="0.900" y="0.900" width="21.200" height="15.200" fill="none" stroke="#5c5c5c" stroke-width="1.800"/><path d="M1.500 1.500l10 8 10-8M1.500 15.500l7.500-7.500M21.500 15.500l-7.500-7.500" fill="none" stroke="#5c5c5c" stroke-width="1.400"/></svg>
<svg style="left:509px;top:111px" width="8" height="9" viewBox="0 0 8 9"><path d="M1 8a5 5 0 0 1 7-6v6z" fill="#5c5c5c"/></svg>
<div class="a" style="left:0;top:134px;width:18px;height:330px;background:#e6e6e6"></div>
<div class="a" style="left:18px;top:134px;width:414px;height:330px;background:#999"></div>
<div class="a" style="left:108px;top:134px;width:235px;height:330px;background:#fff;border-right:1px solid #7a7a7a"></div>
<svg style="left:6px;top:293px" width="6" height="11" viewBox="0 0 6 11"><path d="M0 0l6 5.500-6 5.500z" fill="#747474"/></svg>
<div class="a" style="left:432px;top:134px;width:17px;height:330px;background:#f0f0f0"></div>
<div class="a" style="left:434px;top:151px;width:14px;height:148px;background:#cdcdcd"></div>
<svg style="left:436px;top:139px" width="9" height="6" viewBox="0 0 9 6"><path d="M1.200 5l3.300-3.300 3.300 3.300" fill="none" stroke="#404040" stroke-width="1.800"/></svg>
<svg style="left:436px;top:452px" width="9" height="6" viewBox="0 0 9 6"><path d="M1.200 1l3.300 3.300 3.300-3.300" fill="none" stroke="#404040" stroke-width="1.800"/></svg>
<div class="a" style="left:449px;top:134px;width:19px;height:330px;background:#e8e8e8;border-left:1px solid #d4d4d4;border-right:1px solid #d4d4d4"></div>
<svg style="left:455px;top:293px" width="6" height="11" viewBox="0 0 6 11"><path d="M6 0l-6 5.500 6 5.500z" fill="#666"/></svg>
<div class="a" style="left:468px;top:134px;width:47px;height:330px;background:#fafafa"></div>
<svg style="left:481px;top:147px" width="22" height="22" viewBox="0 0 22 22"><circle cx="9.300" cy="8.700" r="7.700" fill="none" stroke="#6a6a6a" stroke-width="2"/><path d="M15 14.500l5.300 5.300" stroke="#6a6a6a" stroke-width="2.600" stroke-linecap="round"/><path d="M8.300 5.500v6.400l-3.400-3.200zM10.300 5.500v6.400l3.400-3.200z" fill="#6a6a6a"/></svg>
<div class="a" style="left:477px;top:180px;width:28px;height:1px;background:#d0d0d0"></div>
<svg style="left:480px;top:193px" width="24" height="24" viewBox="0 0 24 24"><path d="M1.500 1h9.500l5 5v11.500h-14.500z" fill="#c4e6e8" stroke="#12969c" stroke-width="1.800" stroke-linejoin="round"/><path d="M7.500 5c0.800 0 0.600 2 0 3.800-0.700 2-2.200 4.200-3 3.800-0.800-0.700 1.300-2 3.300-2.300 1.800-0.300 3.500 0 3.300 0.700-0.300 0.700-2-0.200-3-1.400-1-1.300-1.400-4.600-0.600-4.600z" fill="none" stroke="#12969c" stroke-width="0.900"/><circle cx="17.500" cy="17.500" r="6" fill="#12969c"/><path d="M14 17.500h6M17.800 14.800l2.700 2.700-2.700 2.700" fill="none" stroke="#fff" stroke-width="1.600"/></svg>
<svg style="left:480px;top:239px" width="23" height="23" viewBox="0 0 23 23"><rect x="1" y="1" width="21" height="8" rx="1" fill="#f6d6ea" stroke="#d8208c" stroke-width="1.700"/><rect x="1" y="12.500" width="9.500" height="9" rx="1" fill="#f6d6ea" stroke="#d8208c" stroke-width="1.700"/><path d="M14 14h8M14 17.500h8M14 21h8" stroke="#d8208c" stroke-width="1.300"/></svg>
<svg style="left:480px;top:284px" width="24" height="24" viewBox="0 0 24 24"><path d="M1.500 1h9.500l5 5v11.500h-14.500z" fill="#f8d4d8" stroke="#e03040" stroke-width="1.800" stroke-linejoin="round"/><path d="M7.500 5c0.800 0 0.600 2 0 3.800-0.700 2-2.200 4.200-3 3.800-0.800-0.700 1.300-2 3.300-2.300 1.800-0.300 3.500 0 3.300 0.700-0.300 0.700-2-0.200-3-1.400-1-1.300-1.400-4.600-0.600-4.600z" fill="none" stroke="#e03040" stroke-width="0.900"/><circle cx="17.500" cy="17.500" r="6" fill="#e03040"/><path d="M14.200 17.500h6.600M17.500 14.200v6.600" fill="none" stroke="#fff" stroke-width="1.900"/></svg>
<svg style="left:481px;top:331px" width="21" height="22" viewBox="0 0 21 22"><path d="M2.500 0.500h16a2 2 0 0 1 2 2v11a2 2 0 0 1-2 2h-6.500l-5 5.500v-5.500h-4.500a2 2 0 0 1-2-2v-11a2 2 0 0 1 2-2z" fill="#dcb828"/><path d="M5 6h11M5 9.800h8" stroke="#fff" stroke-width="1.600"/></svg>
<svg style="left:479px;top:375px" width="25" height="18" viewBox="0 0 25 18"><path d="M1 1h9.500v16h-9.500z" fill="#fff" stroke="#6868ec" stroke-width="1.800"/><path d="M5.500 4c0.600 0 0.500 1.500 0 2.800-0.500 1.500-1.700 3.200-2.300 2.900-0.600-0.500 1-1.500 2.500-1.700 1.400-0.200 2.700 0 2.500 0.500-0.200 0.500-1.500-0.200-2.300-1-0.800-1-1-3.500-0.400-3.500z" fill="none" stroke="#6868ec" stroke-width="0.900"/><path d="M10.500 0.500h8l5.500 5.500v11.500h-14z" fill="#6868ec"/><path d="M18.500 0.500v5.500h5.500" fill="#fff"/><path d="M8 17v-5.500h5v5.500" fill="#fafafa" stroke="#6868ec" stroke-width="0"/><rect x="8.500" y="12" width="4.500" height="6" fill="#fafafa"/><rect x="10" y="13.500" width="3" height="4.500" fill="#6868ec"/></svg>
<svg style="left:485px;top:400px" width="13" height="8" viewBox="0 0 13 8"><path d="M1 1l5.500 5.500 5.500-5.500" fill="none" stroke="#666" stroke-width="1.800"/></svg>
<div class="a" style="left:477px;top:416px;width:28px;height:1px;background:#d0d0d0"></div>
<svg style="left:486px;top:431px" width="16" height="17" viewBox="0 0 16 17"><path d="M1.500 0.500v16" stroke="#666" stroke-width="2.600"/><path d="M5 8.500h9M10.500 4.500l4 4-4 4" fill="none" stroke="#666" stroke-width="2.200"/></svg>
<svg style="left:108px;top:134px" width="233" height="330" viewBox="829 146 233 330" font-family="'Liberation Sans',sans-serif" fill="#000" stroke="#000" stroke-width="2.200">
<path d="M830 262.500H838" stroke="#000" stroke-width="1"/>
<path d="M830 310.500H838" stroke="#000" stroke-width="1"/>
<path d="M830 377.500H838" stroke="#000" stroke-width="1"/>
<text transform="translate(857 205.3) scale(.1)" font-size="35.8" font-weight="bold">Auftraggeber/Lieferadresse:</text>
<path d="M857 206H904.5" stroke="#000" stroke-width="0.5"/>
<text transform="translate(857 211.2) scale(.1)" font-size="39.0">Herr</text>
<text transform="translate(857 216.6) scale(.1)" font-size="39.0">Bernd Berger</text>
<text transform="translate(857 220.7) scale(.1)" font-size="39.0">Rabatt-. 12-18</text>
<text transform="translate(857 224.9) scale(.1)" font-size="39.0">53604 Bad Honnef</text>
<text transform="translate(946 205.3) scale(.1)" font-size="35.8" font-weight="bold">Rechnungsadresse:</text>
<path d="M946 206H969.5" stroke="#000" stroke-width="0.5"/>
<text transform="translate(946 211.2) scale(.1)" font-size="39.0">Firma</text>
<text transform="translate(946 216.6) scale(.1)" font-size="39.0">Bernd Berger KG</text>
<text transform="translate(946 220.7) scale(.1)" font-size="39.0">Rabatt-. 12-18</text>
<text transform="translate(946 224.9) scale(.1)" font-size="39.0">53604 Bad Honnef</text>
<text stroke-width="0.800" transform="translate(857 254) scale(.1)" font-size="54.5" font-weight="bold">AUFTRAGSBESTÄTIGUNG</text>
<text transform="translate(857 263.2) scale(.1)" font-size="29.0" font-weight="bold">Sachbearbeiter:</text>
<path d="M857 263.9H878.7" stroke="#000" stroke-width="0.5"/>
<text transform="translate(946 263.2) scale(.1)" font-size="29.0" font-weight="bold">Kundennummer:</text>
<path d="M946 263.9H972.8" stroke="#000" stroke-width="0.5"/>
<text transform="translate(979 263.2) scale(.1)" font-size="29.0" font-weight="bold">Unser Zeichen:</text>
<path d="M979 263.9H1001.7" stroke="#000" stroke-width="0.5"/>
<text transform="translate(1029.7 263.2) scale(.1)" font-size="29.0" font-weight="bold" text-anchor="end">Belegnummer:</text>
<path d="M1008 263.9H1029.7" stroke="#000" stroke-width="0.5"/>
<text transform="translate(1051.8 263.2) scale(.1)" font-size="29.0" font-weight="bold" text-anchor="end">Datum:</text>
<path d="M1041 263.9H1051.8" stroke="#000" stroke-width="0.5"/>
<text transform="translate(857 267.7) scale(.1)" font-size="28.0">Administrator</text>
<text transform="translate(946 267.7) scale(.1)" font-size="28.0">berger</text>
<text transform="translate(1025.3 267.7) scale(.1)" font-size="28.0" text-anchor="end">AB2100002</text>
<text transform="translate(1051.3 267.7) scale(.1)" font-size="28.0" text-anchor="end">13.04.2021</text>
<path d="M857 269.7H1051.5" stroke="#000" stroke-width="1.2"/>
<text transform="translate(857 274.8) scale(.1)" font-size="37.0" font-weight="bold">Position</text>
<text transform="translate(880 274.8) scale(.1)" font-size="37.0" font-weight="bold">Text</text>
<text transform="translate(992 274.8) scale(.1)" font-size="37.0" font-weight="bold" text-anchor="end">Menge Einh.</text>
<text transform="translate(1020.5 274.8) scale(.1)" font-size="37.0" font-weight="bold" text-anchor="end">Einzelpreis</text>
<text transform="translate(1051.5 274.8) scale(.1)" font-size="37.0" font-weight="bold" text-anchor="end">Gesamtpreis</text>
<path d="M857 276.9H1051.5" stroke="#000" stroke-width="1.2"/>
<text stroke-width="0.800" transform="translate(857 288.8) scale(.1)" font-size="46.5" font-weight="bold">Titel 1</text>
<text stroke-width="0.800" transform="translate(880 288.8) scale(.1)" font-size="46.5" font-weight="bold">Reparaturarbeiten</text>
<text transform="translate(857 297.4) scale(.1)" font-size="39.0">1.001</text>
<text transform="translate(880 297.4) scale(.1)" font-size="39.0">Gewindeschneiden</text>
<text transform="translate(982 297.4) scale(.1)" font-size="39.0" text-anchor="end">1,5</text>
<text transform="translate(983.5 297.4) scale(.1)" font-size="39.0">Std.</text>
<text transform="translate(1020.5 297.4) scale(.1)" font-size="39.0" text-anchor="end">25,16 €</text>
<text transform="translate(1051.5 297.4) scale(.1)" font-size="39.0" text-anchor="end">37,74 €</text>
<text transform="translate(857 305.8) scale(.1)" font-size="39.0">1.002</text>
<text transform="translate(880 305.8) scale(.1)" font-size="39.0">Heizkreisverteiler für zwei Heizkreise</text>
<text transform="translate(982 305.8) scale(.1)" font-size="39.0" text-anchor="end">1</text>
<text transform="translate(983.5 305.8) scale(.1)" font-size="39.0">Stück</text>
<text transform="translate(1020.5 305.8) scale(.1)" font-size="39.0" text-anchor="end">889,64 €</text>
<text transform="translate(1051.5 305.8) scale(.1)" font-size="39.0" text-anchor="end">889,64 €</text>
<text transform="translate(857 313.8) scale(.1)" font-size="39.0">1.003</text>
<text transform="translate(880 313.8) scale(.1)" font-size="39.0">HT-Abflußrohr DN 100</text>
<text transform="translate(982 313.8) scale(.1)" font-size="39.0" text-anchor="end">1</text>
<text transform="translate(983.5 313.8) scale(.1)" font-size="39.0">Stck</text>
<text transform="translate(1020.5 313.8) scale(.1)" font-size="39.0" text-anchor="end">12,78 €</text>
<text transform="translate(1051.5 313.8) scale(.1)" font-size="39.0" text-anchor="end">12,78 €</text>
<text transform="translate(880 318) scale(.1)" font-size="39.0">heißwasserbeständiges Kunststoffrohr mit</text>
<text transform="translate(880 322.9) scale(.1)" font-size="39.0">vormontierten Dichtring einschließlich</text>
<text transform="translate(880 326.9) scale(.1)" font-size="39.0">Befestigung liefern und montieren.</text>
<text transform="translate(880 331.7) scale(.1)" font-size="39.0">Länge:</text>
<text transform="translate(910 331.7) scale(.1)" font-size="39.0">1000 mm</text>
<text transform="translate(880 335.7) scale(.1)" font-size="39.0">Wandstärke:</text>
<text transform="translate(915 335.7) scale(.1)" font-size="39.0">2,8 mm</text>
<text transform="translate(857 344) scale(.1)" font-size="39.0">1.004</text>
<text transform="translate(880 344) scale(.1)" font-size="39.0">Montagezeit RG ST zur Befestigung des</text>
<text transform="translate(982 344) scale(.1)" font-size="39.0" text-anchor="end">1</text>
<text transform="translate(983.5 344) scale(.1)" font-size="39.0">Std.</text>
<text transform="translate(1020.5 344) scale(.1)" font-size="39.0" text-anchor="end">34,89 €</text>
<text transform="translate(1051.5 344) scale(.1)" font-size="39.0" text-anchor="end">34,89 €</text>
<text transform="translate(880 348.1) scale(.1)" font-size="39.0">Kessels auf dem Speicher</text>
<text transform="translate(857 355.8) scale(.1)" font-size="39.0">1.005</text>
<text transform="translate(880 355.8) scale(.1)" font-size="39.0">Fußschraubventil-Set für Höhenausgleich</text>
<text transform="translate(982 355.8) scale(.1)" font-size="39.0" text-anchor="end">1</text>
<text transform="translate(983.5 355.8) scale(.1)" font-size="39.0">Stck</text>
<text transform="translate(1020.5 355.8) scale(.1)" font-size="39.0" text-anchor="end">18,10 €</text>
<text transform="translate(1051.5 355.8) scale(.1)" font-size="39.0" text-anchor="end">18,10 €</text>
<text transform="translate(857 363.9) scale(.1)" font-size="39.0">1.006</text>
<text transform="translate(880 363.9) scale(.1)" font-size="39.0">Relais für die elektrische Verknüpfung mit</text>
<text transform="translate(982 363.9) scale(.1)" font-size="39.0" text-anchor="end">1</text>
<text transform="translate(983.5 363.9) scale(.1)" font-size="39.0">Stück</text>
<text transform="translate(1020.5 363.9) scale(.1)" font-size="39.0" text-anchor="end">28,01 €</text>
<text transform="translate(1051.5 363.9) scale(.1)" font-size="39.0" text-anchor="end">28,01 €</text>
<text transform="translate(880 369) scale(.1)" font-size="39.0">Wärmepumpen und Wärmezentren</text>
<text transform="translate(880 379.7) scale(.1)" font-size="38.5" font-weight="bold">Summe Titel 1</text>
<text transform="translate(1051.5 379.7) scale(.1)" font-size="38.5" font-weight="bold" text-anchor="end">1.006,02 €</text>
<path d="M879 381.4H1051.5" stroke="#000" stroke-width="0.7"/>
<text stroke-width="0.800" transform="translate(857 395.8) scale(.1)" font-size="46.5" font-weight="bold">Titel 2</text>
<text stroke-width="0.800" transform="translate(880 395.8) scale(.1)" font-size="46.5" font-weight="bold">Wartungsarbeiten</text>
<text transform="translate(857 405.8) scale(.1)" font-size="39.0">2.001</text>
<text transform="translate(880 405.8) scale(.1)" font-size="39.0">Jahreswartung gemäß Wartungsplan</text>
<text transform="translate(1051.5 405.8) scale(.1)" font-size="39.0" text-anchor="end">120,00 €</text>
<text transform="translate(880 409.9) scale(.1)" font-size="39.0">durchführen</text>
<text transform="translate(857 418) scale(.1)" font-size="39.0">2.002</text>
<text transform="translate(880 418) scale(.1)" font-size="39.0">Reinigung äußere Typ F</text>
<text transform="translate(982 418) scale(.1)" font-size="39.0" text-anchor="end">1</text>
<text transform="translate(983.5 418) scale(.1)" font-size="39.0">Std.</text>
<text transform="translate(1020.5 418) scale(.1)" font-size="39.0" text-anchor="end">10,38 €</text>
<text transform="translate(1051.5 418) scale(.1)" font-size="39.0" text-anchor="end">10,38 €</text>
<text transform="translate(880 429.9) scale(.1)" font-size="38.5" font-weight="bold">Summe Titel 2</text>
<text transform="translate(1051.5 429.9) scale(.1)" font-size="38.5" font-weight="bold" text-anchor="end">130,38 €</text>
<path d="M879 430.9H1051.5" stroke="#000" stroke-width="1.3"/>
<text transform="translate(880 450.9) scale(.1)" font-size="39.0">Übertrag</text>
<text transform="translate(1051.5 450.9) scale(.1)" font-size="39.0" text-anchor="end">1.136,40 €</text>
</svg>
</div>
<div class="badge" style="left:588px;top:470px">1</div><div class="badge" style="left:445px;top:608px">2</div><div class="badge" style="left:643px;top:531px">3</div><div class="badge" style="left:769px;top:164px">4</div>
<svg style="left:644px;top:511px" width="14" height="21" viewBox="-1 -1 14 21"><path d="M0 0V16L3.800 12.600L6.400 18.600L9 17.500L6.500 11.700H11.500Z" fill="#fff" stroke="#000" stroke-width="1" stroke-linejoin="miter"/></svg>
</body>
</html>
